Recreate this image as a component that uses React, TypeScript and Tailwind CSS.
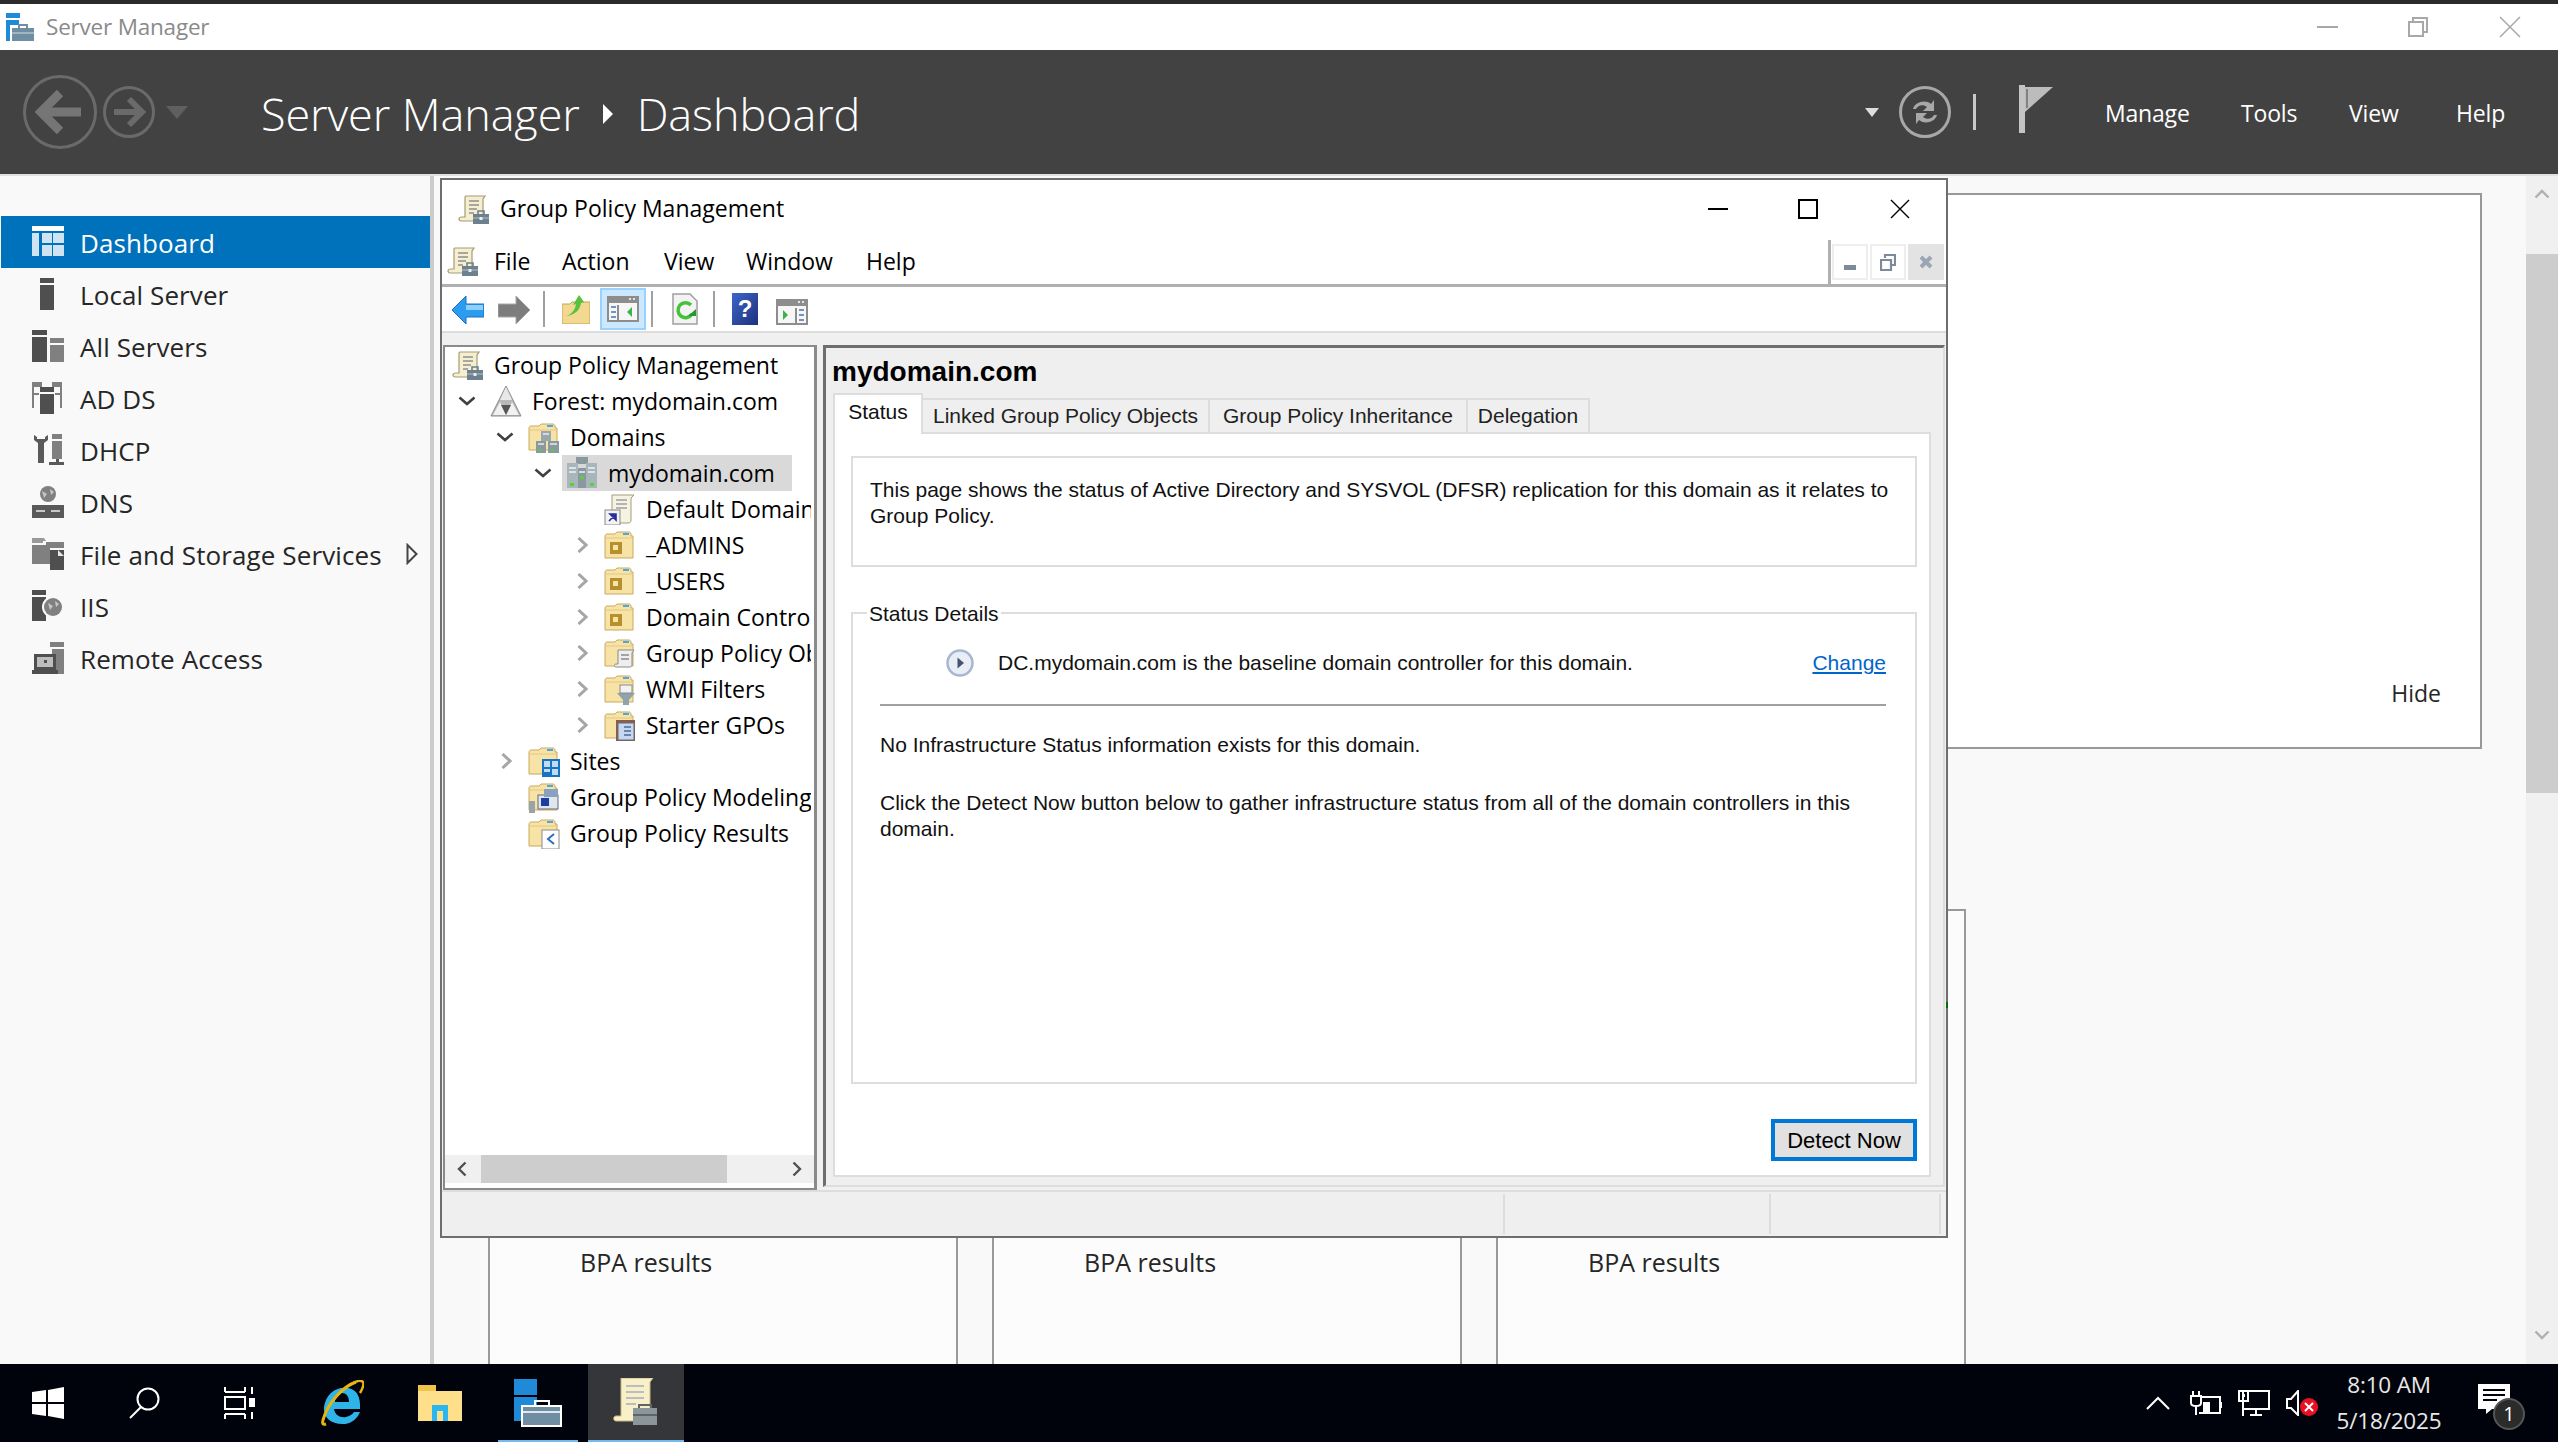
import React from 'react'

const ScrollIcon = ({ className = '' }: { className?: string }) => (
  <svg viewBox="0 0 32 32" className={className}>
    <path d="M8 3h19l-2 3v18c0 2-1 4-3 4H3c-1 0-2-1-2-2s1-2 3-2h3V6C7 4 7 3 8 3z" fill="#f5efcf" stroke="#a59c74" strokeWidth="1.2" />
    <path d="M11 8h10M11 12h10M11 16h8M11 20h5" stroke="#8f8f8f" strokeWidth="1.6" />
    <rect x="15" y="21" width="16" height="10" fill="#6c818d" />
    <path d="M20 21v-3h6v3" fill="none" stroke="#6c818d" strokeWidth="1.6" />
    <path d="M15 25h16" stroke="#a9b8c0" strokeWidth="1.2" />
    <rect x="21.500" y="24" width="3" height="3" fill="#e7edf0" />
  </svg>
)

const FolderBase = () => (
  <>
    <path d="M1 7c0-1 1-2 2-2h8l2-2h12c1 0 2 1 2 2v2h2v22H1z" fill="#f8e3a6" stroke="#c9a95f" strokeWidth="1" />
    <path d="M1 9h28" stroke="#e2c67e" strokeWidth="1" />
    <rect x="19" y="4" width="6" height="2" fill="#49a7e8" />
  </>
)

const FolderIcon = ({ kind }: { kind: string }) => (
  <svg viewBox="0 0 32 32" className="w-8 h-8 shrink-0">
    <FolderBase />
    {kind === 'ou' && (
      <>
        <rect x="6" y="13" width="12" height="12" fill="#b78f2c" />
        <rect x="9" y="16" width="5" height="5" fill="#f3e6a8" />
      </>
    )}
    {kind === 'gpo' && (
      <>
        <path d="M14 13h16l-2 3v12c0 1-1 2-2 2H12c-2 0-2-3 0-3h2z" fill="#eeeeee" stroke="#8a8a8a" />
        <path d="M17 18h8M17 22h8" stroke="#8a8a8a" strokeWidth="1.6" />
      </>
    )}
    {kind === 'wmi' && (
      <>
        <path d="M13 20h18l-6 7v5h-6v-5z" fill="#8fa3ad" />
        <rect x="16" y="12" width="12" height="8" fill="#f2f2f2" stroke="#8a8a8a" />
      </>
    )}
    {kind === 'starter' && (
      <>
        <rect x="12" y="11" width="19" height="21" fill="#8b5b4d" />
        <rect x="14" y="14" width="16" height="17" fill="#c6d7ee" stroke="#60707c" />
        <path d="M20 18h7M20 22h7M20 26h7" stroke="#4a6a96" strokeWidth="1.6" />
      </>
    )}
    {kind === 'sites' && (
      <>
        <rect x="14" y="14" width="18" height="18" fill="#1773c4" />
        <rect x="16" y="16" width="6" height="6" fill="#bfdcf3" />
        <rect x="24" y="16" width="6" height="6" fill="#bfdcf3" />
        <rect x="24" y="24" width="6" height="6" fill="#bfdcf3" />
        <rect x="16" y="24" width="6" height="3" fill="#bfdcf3" />
      </>
    )}
    {kind === 'modeling' && (
      <>
        <rect x="10" y="14" width="20" height="14" fill="#dfe6f2" stroke="#606a78" />
        <rect x="13" y="17" width="8" height="8" fill="#1c3f9e" />
        <rect x="1" y="20" width="6" height="12" fill="#9aa3a8" />
        <rect x="16" y="8" width="14" height="8" fill="#8aa0c0" />
      </>
    )}
    {kind === 'results' && (
      <>
        <rect x="14" y="13" width="17" height="19" fill="#ffffff" stroke="#8a8a8a" />
        <path d="M26 17l-6 5 6 5" fill="none" stroke="#2a6fb8" strokeWidth="2" />
      </>
    )}
    {kind === 'domains' && <ServerCluster />}
  </svg>
)

const ServerCluster = () => (
  <>
    <rect x="13" y="10" width="10" height="10" fill="#9aa7ae" />
    <rect x="8" y="20" width="10" height="12" fill="#8a989f" />
    <rect x="20" y="20" width="11" height="12" fill="#8a989f" />
    <path d="M10 23h6M22 23h7M15 13h6" stroke="#e6ecef" strokeWidth="1.4" />
    <rect x="10" y="28" width="3" height="2" fill="#57d13a" />
    <rect x="23" y="28" width="3" height="2" fill="#57d13a" />
  </>
)

const DomainIcon = () => (
  <svg viewBox="0 0 32 32" className="w-8 h-8 shrink-0">
    <rect x="10" y="0" width="12" height="7" fill="#8a989f" />
    <rect x="1" y="6" width="11" height="25" fill="#a8b5bb" />
    <rect x="20" y="6" width="11" height="25" fill="#a8b5bb" />
    <rect x="12" y="11" width="8" height="20" fill="#8a989f" />
    <path d="M3 11h7M3 15h7M22 11h7M22 15h7M13 15h6" stroke="#eef2f4" strokeWidth="1.4" />
    <rect x="4" y="26" width="4" height="3" fill="#55d43a" />
    <rect x="14" y="19" width="4" height="3" fill="#55d43a" />
    <rect x="24" y="26" width="4" height="3" fill="#55d43a" />
  </svg>
)

const ForestIcon = () => (
  <svg viewBox="0 0 32 32" className="w-8 h-8 shrink-0">
    <path d="M16 1L31 31H1z" fill="#b9b9b9" stroke="#8c8c8c" />
    <path d="M16 2l6 13H10z" fill="#e8e8e8" />
    <path d="M10 17l-7 13h13zM22 17l-6 13h13z" fill="#f1f1f1" />
    <path d="M16 30l-5-10h10z" fill="#555555" />
  </svg>
)

const ShortcutScroll = () => (
  <svg viewBox="0 0 32 32" className="w-8 h-8 shrink-0">
    <path d="M8 2h22l-3 3v22c0 2-1 3-3 3H8z" fill="#f6f3e2" stroke="#a59c74" />
    <path d="M12 7h11M12 11h11M12 15h11" stroke="#a0a0a0" strokeWidth="1.4" />
    <rect x="1" y="17" width="15" height="15" fill="#f2f2f2" stroke="#8a8a8a" />
    <path d="M5 28l6-6M6 21h6v6z" stroke="#2b2e9e" fill="#2b2e9e" strokeWidth="1.6" />
  </svg>
)

const Chevron = ({ dir }: { dir: 'down' | 'right' }) =>
  dir === 'down' ? (
    <svg viewBox="0 0 18 10" className="w-[18px] h-[10px]">
      <path d="M1.500 1.500L9 8l7.500-6.500" fill="none" stroke="#404040" strokeWidth="2.600" />
    </svg>
  ) : (
    <svg viewBox="0 0 11 16" className="w-[11px] h-4 ml-[2px]">
      <path d="M1.500 1L9 8l-7.500 7" fill="none" stroke="#a6a6a6" strokeWidth="3" />
    </svg>
  )

const navIcons: Record<string, React.ReactNode> = {
  Dashboard: (
    <>
      <rect x="0" y="0" width="32" height="5" fill="#ffffff" />
      <rect x="0" y="7" width="7" height="23" fill="#cfe4f2" />
      <rect x="10" y="7" width="10" height="10" fill="#cfe4f2" />
      <rect x="21" y="7" width="11" height="10" fill="#cfe4f2" />
      <rect x="10" y="19" width="10" height="11" fill="#cfe4f2" />
      <rect x="21" y="19" width="11" height="11" fill="#cfe4f2" />
    </>
  ),
  'Local Server': (
    <>
      <rect x="8" y="0" width="14" height="5" fill="#4f4f4f" />
      <rect x="8" y="7" width="14" height="25" fill="#4f4f4f" />
    </>
  ),
  'All Servers': (
    <>
      <rect x="0" y="0" width="15" height="5" fill="#4f4f4f" />
      <rect x="0" y="7" width="15" height="25" fill="#4f4f4f" />
      <rect x="18" y="8" width="14" height="5" fill="#808080" />
      <rect x="18" y="15" width="14" height="17" fill="#808080" />
    </>
  ),
  'AD DS': (
    <>
      <path d="M0 0h10v5H2v6h5v2H2v13H0zM30 0H20v5h8v6h-5v2h5v13h2z" fill="#808080" />
      <rect x="8" y="5" width="14" height="5" fill="#4f4f4f" />
      <rect x="8" y="12" width="14" height="20" fill="#4f4f4f" />
    </>
  ),
  DHCP: (
    <>
      <path d="M2 1v5l4 3v20h6V9l4-3V1l-3 2v2h-8V3z" fill="#5a5a5a" />
      <rect x="20" y="0" width="10" height="5" fill="#808080" />
      <rect x="20" y="7" width="10" height="18" fill="#808080" />
      <rect x="17" y="28" width="15" height="3" fill="#5a5a5a" />
      <rect x="24" y="25" width="3" height="4" fill="#5a5a5a" />
    </>
  ),
  DNS: (
    <>
      <circle cx="16" cy="8" r="8" fill="#808080" />
      <path d="M10 5l5 3-3 4zM18 3l4 3-3 3z" fill="#c6c6c6" />
      <rect x="0" y="19" width="32" height="13" fill="#5a5a5a" />
      <path d="M4 25h9M19 25h9" stroke="#c8c8c8" strokeWidth="2" />
    </>
  ),
  'File and Storage Services': (
    <>
      <path d="M0 0h12l2 3h-3v2H0z" fill="#9a9a9a" />
      <path d="M0 7h18v19H0z" fill="#808080" />
      <path d="M14 4h18v6H14z" fill="#808080" />
      <path d="M18 12h14v20H18z" fill="#4f4f4f" />
      <path d="M26 12l6 6h-6z" fill="#e6e6e6" />
    </>
  ),
  IIS: (
    <>
      <rect x="0" y="0" width="14" height="5" fill="#4f4f4f" />
      <rect x="0" y="7" width="14" height="24" fill="#4f4f4f" />
      <circle cx="21" cy="17" r="11" fill="#f9f9f9" />
      <circle cx="21" cy="17" r="9" fill="#808080" />
      <path d="M16 13l5 3-3 4zM23 11l4 3-3 3z" fill="#c6c6c6" />
    </>
  ),
  'Remote Access': (
    <>
      <rect x="18" y="0" width="14" height="5" fill="#808080" />
      <rect x="20" y="7" width="12" height="25" fill="#808080" />
      <rect x="2" y="12" width="22" height="16" fill="#4f4f4f" />
      <rect x="5" y="15" width="16" height="10" fill="#bdbdbd" />
      <rect x="0" y="28" width="26" height="4" fill="#4f4f4f" />
      <rect x="12" y="18" width="3" height="3" fill="#4f4f4f" />
    </>
  ),
}

const NAV = ['Dashboard', 'Local Server', 'All Servers', 'AD DS', 'DHCP', 'DNS', 'File and Storage Services', 'IIS', 'Remote Access']

const Sidebar = () => (
  <aside className="w-[434px] shrink-0 bg-[#f9f9f9] border-r-4 border-[#cccccc] pt-10 text-[26px] tracking-[0.1px]">
    {NAV.map((name) => (
      <div key={name} className={`h-[52px] flex items-center ml-px pl-[31px] ${name === 'Dashboard' ? 'bg-[#0072bc] text-white' : 'text-[#262626]'}`}>
        <svg viewBox="0 0 32 32" className="w-8 h-8 shrink-0">{navIcons[name]}</svg>
        <span className="ml-4 pt-[3px] whitespace-nowrap">{name}</span>
        {name === 'File and Storage Services' && (
          <svg viewBox="0 0 12 22" className="w-3 h-[22px] ml-[24px]">
            <path d="M1.500 2L10.500 11 1.500 20z" fill="none" stroke="#444444" strokeWidth="2" />
          </svg>
        )}
      </div>
    ))}
  </aside>
)

const Card = () => (
  <div className="w-[470px] h-[472px] shrink-0 border-2 border-[#999999] bg-[#fcfcfc] flex flex-col justify-end pb-[98px] pl-[90px] text-[25px] text-[#262626]">
    <span>BPA results</span>
  </div>
)

const Header = () => (
  <header className="h-[124px] bg-[#424242] flex items-center pl-[23px] text-white">
    <svg viewBox="0 0 74 76" className="w-[74px] h-[76px]">
      <circle cx="37" cy="38" r="35.500" fill="none" stroke="#6a6a6a" strokeWidth="3" />
      <path d="M17 38h41" stroke="#757575" strokeWidth="9" />
      <path d="M37 19L18 38l19 19" fill="none" stroke="#757575" strokeWidth="9" />
    </svg>
    <svg viewBox="0 0 52 52" className="w-[52px] h-[52px] ml-[6px]">
      <circle cx="26" cy="26" r="24.500" fill="none" stroke="#6a6a6a" strokeWidth="3" />
      <path d="M39 26H11" stroke="#6a6a6a" strokeWidth="6" />
      <path d="M26 13l13 13-13 13" fill="none" stroke="#6a6a6a" strokeWidth="6" />
    </svg>
    <svg viewBox="0 0 22 13" className="w-[22px] h-[13px] ml-[11px]"><path d="M0 0h22L11 13z" fill="#5f5f5f" /></svg>
    <div className="ml-[73px] pt-[3px] flex items-center text-[45px] font-light tracking-[-0.1px] leading-none">
      <span>Server Manager</span>
      <svg viewBox="0 0 10 20" className="w-[10px] h-5 ml-[23px] mr-[24px]"><path d="M0 0l10 10L0 20z" fill="#ffffff" /></svg>
      <span>Dashboard</span>
    </div>
    <div className="ml-auto flex items-center">
      <svg viewBox="0 0 14 9" className="w-[14px] h-[9px]"><path d="M0 0h14L7 9z" fill="#dddddd" /></svg>
      <svg viewBox="0 0 52 52" className="w-[52px] h-[52px] ml-5">
        <circle cx="26" cy="26" r="24.500" fill="none" stroke="#a8a8a8" strokeWidth="3" />
        <path d="M14 23c2-7 12-10 18-5l3-4v11H24l4-4c-4-3-9-2-11 2zM38 29c-2 7-12 10-18 5l-3 4V27h11l-4 4c4 3 9 2 11-2z" fill="#a8a8a8" />
      </svg>
      <div className="w-[3px] h-9 bg-[#c8c8c8] ml-[22px]" />
      <svg viewBox="0 0 34 48" className="w-[34px] h-12 ml-[43px] -mt-[6px]">
        <rect x="0" y="0" width="6" height="48" fill="#c4c4c4" />
        <path d="M6 2h28L6 27z" fill="#bcbcbc" />
        <path d="M8 4v19" stroke="#6f6f6f" strokeWidth="1.500" />
      </svg>
      <nav className="flex items-center pt-[2px] text-[23px] tracking-[-0.2px] ml-[52px] mr-[53px]">
        <span className="w-[136px]">Manage</span>
        <span className="w-[108px]">Tools</span>
        <span className="w-[107px]">View</span>
        <span>Help</span>
      </nav>
    </div>
  </header>
)

const TitleBar = () => (
  <div className="h-[46px] bg-white flex items-center pl-[6px] text-[#8a8a8a] text-[22.500px] tracking-[-0.2px]">
    <svg viewBox="0 0 28 28" className="w-7 h-7">
      <rect x="0" y="0" width="14" height="5" fill="#1f8ad8" />
      <rect x="0" y="7" width="4" height="21" fill="#1f8ad8" />
      <rect x="4" y="7" width="9" height="5" fill="#1f8ad8" />
      <rect x="6" y="15" width="22" height="13" fill="#6f8ea1" />
      <path d="M13 15v-3h8v3" fill="none" stroke="#6f8ea1" strokeWidth="2" />
      <path d="M6 20h22" stroke="#cfdce4" />
    </svg>
    <span className="ml-3">Server Manager</span>
    <div className="ml-auto flex items-center">
      <div className="w-[21px] h-[2px] bg-[#a8a8a8]" />
      <svg viewBox="0 0 20 20" className="w-5 h-5 ml-[70px]">
        <path d="M5 4V1h14v14h-3M1 5h14v14H1z" fill="none" stroke="#a8a8a8" strokeWidth="2" />
      </svg>
      <svg viewBox="0 0 22 22" className="w-[22px] h-[22px] ml-[71px] mr-[37px]">
        <path d="M1 1l20 20M21 1L1 21" stroke="#a8a8a8" strokeWidth="1.500" />
      </svg>
    </div>
  </div>
)

type TreeRow = { label: string; depth: number; chevron?: 'down' | 'right'; icon: React.ReactNode; selected?: boolean }

const TREE: TreeRow[] = [
  { label: 'Group Policy Management', depth: 0, icon: <ScrollIcon className="w-8 h-8 shrink-0" /> },
  { label: 'Forest: mydomain.com', depth: 1, chevron: 'down', icon: <ForestIcon /> },
  { label: 'Domains', depth: 2, chevron: 'down', icon: <FolderIcon kind="domains" /> },
  { label: 'mydomain.com', depth: 3, chevron: 'down', icon: <DomainIcon />, selected: true },
  { label: 'Default Domain Policy', depth: 4, icon: <ShortcutScroll /> },
  { label: '_ADMINS', depth: 4, chevron: 'right', icon: <FolderIcon kind="ou" /> },
  { label: '_USERS', depth: 4, chevron: 'right', icon: <FolderIcon kind="ou" /> },
  { label: 'Domain Controllers', depth: 4, chevron: 'right', icon: <FolderIcon kind="ou" /> },
  { label: 'Group Policy Objects', depth: 4, chevron: 'right', icon: <FolderIcon kind="gpo" /> },
  { label: 'WMI Filters', depth: 4, chevron: 'right', icon: <FolderIcon kind="wmi" /> },
  { label: 'Starter GPOs', depth: 4, chevron: 'right', icon: <FolderIcon kind="starter" /> },
  { label: 'Sites', depth: 2, chevron: 'right', icon: <FolderIcon kind="sites" /> },
  { label: 'Group Policy Modeling', depth: 2, icon: <FolderIcon kind="modeling" /> },
  { label: 'Group Policy Results', depth: 2, icon: <FolderIcon kind="results" /> },
]

const INDENT = ['pl-[7px]', 'pl-[7px]', 'pl-[45px]', 'pl-[83px]', 'pl-[121px]']

const Tree = () => (
  <div className="w-[374px] shrink-0 bg-white border-2 border-r-[3px] border-[#8a8a8a] flex flex-col overflow-hidden text-[23px] text-black">
    <div className="flex-1 overflow-hidden pr-[3px]">
      {TREE.map((row) => (
        <div key={row.label} className={`h-9 flex items-center whitespace-nowrap overflow-hidden ${INDENT[row.depth]}`}>
          {row.depth > 0 && (
            <span className="w-[38px] shrink-0 flex justify-center pr-2">
              {row.chevron && <Chevron dir={row.chevron} />}
            </span>
          )}
          <span className={`flex items-center h-full ${row.selected ? 'bg-[#d9d9d9] w-[230px] -ml-1 pl-1' : ''}`}>
            {row.icon}
            <span className="ml-[10px]">{row.label}</span>
          </span>
        </div>
      ))}
    </div>
    <div className="h-[28px] mb-[5px] bg-[#f0f0f0] flex items-center px-[12px]">
      <svg viewBox="0 0 10 16" className="w-[10px] h-4"><path d="M8.500 1.500L2 8l6.500 6.500" fill="none" stroke="#505050" strokeWidth="2.400" /></svg>
      <div className="w-[246px] h-full bg-[#cdcdcd] ml-[14px]" />
      <svg viewBox="0 0 10 16" className="w-[10px] h-4 ml-auto"><path d="M1.500 1.500L8 8l-6.500 6.500" fill="none" stroke="#505050" strokeWidth="2.400" /></svg>
    </div>
  </div>
)

const TABS = [
  { label: 'Linked Group Policy Objects', w: 'w-[287px]' },
  { label: 'Group Policy Inheritance', w: 'w-[258px]' },
  { label: 'Delegation', w: 'w-[122px]' },
]

const StatusPane = () => (
  <section className="flex-1 min-w-0 ml-[6px] mr-[1px] mb-[3px] border-l-[3px] border-t-[3px] border-[#6e6e6e] border-r-2 border-r-[#dddddd] border-b-2 border-b-[#dddddd] bg-[#efefef] pl-[7px] pr-[12px] pb-2 flex flex-col font-['Liberation_Sans'] text-[21px] text-[#111111]">
    <h1 className="h-[45px] flex items-center font-bold text-[28px] text-black -ml-px pt-[2px]">mydomain.com</h1>
    <div className="flex items-end h-[41px] text-[21px] relative z-10 -mb-[2px]">
      <div className="w-[90px] h-[41px] bg-white border-2 border-b-0 border-[#dddddd] flex items-center justify-center pb-[5px]">Status</div>
      {TABS.map((tab) => (
        <div key={tab.label} className={`${tab.w} h-9 border-2 border-l-0 border-[#dddddd] flex items-center justify-center text-[#222222]`}>{tab.label}</div>
      ))}
    </div>
    <div className="flex-1 bg-white border-2 border-[#dddddd] pt-[22px] pl-4 pr-3 flex flex-col">
      <div className="h-[111px] border-2 border-[#dddddd] pl-[17px] pr-2 pt-[19px] leading-[26px]">
        This page shows the status of Active Directory and SYSVOL (DFSR) replication for this domain as it relates to Group Policy.
      </div>
      <div className="relative h-[472px] mt-[45px] border-2 border-[#dddddd] pl-[27px] pr-[29px]">
        <span className="absolute -top-[12px] left-[14px] bg-white px-[2px] leading-6">Status Details</span>
        <div className="flex items-center h-[92px] pt-2 pl-[66px] border-b-2 border-[#a0a0a0]">
          <svg viewBox="0 0 28 28" className="w-7 h-7 shrink-0">
            <circle cx="14" cy="14" r="12.500" fill="#e8edf6" stroke="#a9b6cf" strokeWidth="2.500" />
            <path d="M11.500 8.500L18 14l-6.500 5.500z" fill="#44546e" />
          </svg>
          <span className="ml-6">DC.mydomain.com is the baseline domain controller for this domain.</span>
          <span className="ml-auto text-[#0066cc] underline">Change</span>
        </div>
        <p className="mt-[26px] leading-[26px]">No Infrastructure Status information exists for this domain.</p>
        <p className="mt-[32px] leading-[26px]">Click the Detect Now button below to gather infrastructure status from all of the domain controllers in this domain.</p>
      </div>
      <div className="flex justify-end mt-[35px]">
        <button className="w-[146px] h-[42px] border-[4px] border-[#0078d7] bg-[#e1e1e1] text-[22px] text-black">Detect Now</button>
      </div>
    </div>
  </section>
)

const ToolSep = () => <div className="w-[2px] h-9 bg-[#a0a0a0]" />

const PaneToggle = ({ flip }: { flip?: boolean }) => (
  <svg viewBox="0 0 32 26" className="w-8 h-[26px]">
    <rect x="1" y="1" width="30" height="24" fill="#f6f6f6" stroke="#8d8d8d" strokeWidth="2" />
    <rect x="1" y="1" width="30" height="6" fill="#8d8d8d" />
    <path d="M22 3h2M26 3h2" stroke="#ffffff" strokeWidth="1.500" />
    {flip ? (
      <>
        <path d="M7 11l5 5-5 5z" fill="#3bb34a" />
        <path d="M20 9v15" stroke="#8d8d8d" strokeWidth="2" />
        <path d="M23 11h5M23 16h5M23 21h5" stroke="#7393bd" strokeWidth="2" />
      </>
    ) : (
      <>
        <path d="M25 11l-5 5 5 5z" fill="#3bb34a" />
        <path d="M11 9v15" stroke="#8d8d8d" strokeWidth="2" />
        <path d="M4 11h5M4 16h5M4 21h5" stroke="#7393bd" strokeWidth="2" />
      </>
    )}
  </svg>
)

const Toolbar = () => (
  <div className="h-[46px] bg-white border-b-2 border-[#dddddd] flex items-center pl-[10px]">
    <svg viewBox="0 0 32 30" className="w-8 h-[30px] mt-[2px]">
      <path d="M0 15L14 1v8h18v13H14v7z" fill="#2b9cf0" stroke="#1b6fc0" />
      <path d="M14 10h17v5H14z" fill="#8fd0fb" />
    </svg>
    <svg viewBox="0 0 32 30" className="w-8 h-[30px] ml-[14px] mt-[2px]">
      <path d="M32 15L18 1v8H0v13h18v7z" fill="#7d7d7d" stroke="#a8a8a8" />
    </svg>
    <div className="ml-[13px]"><ToolSep /></div>
    <svg viewBox="0 0 28 30" className="w-7 h-[30px] ml-[17px]">
      <path d="M0 10h8l2-2h18v22H0z" fill="#f2d890" stroke="#c4a45a" />
      <path d="M4 22c6-2 9-6 10-12l-3 1 6-10 5 7-3 1c-1 7-6 12-15 13z" fill="#56c23d" />
    </svg>
    <div className="w-[46px] h-[42px] ml-[10px] bg-[#cce8ff] border-2 border-[#99d1ff] flex items-center justify-center">
      <PaneToggle />
    </div>
    <div className="ml-[5px]"><ToolSep /></div>
    <svg viewBox="0 0 26 32" className="w-[26px] h-8 ml-[19px]">
      <path d="M1 1h17l7 7v23H1z" fill="#f3f3f3" stroke="#a0a0a0" strokeWidth="1.500" />
      <path d="M19 12a7.500 7.500 0 1 0 1 9" fill="none" stroke="#46c23a" strokeWidth="3.500" />
      <path d="M16 23h8v-7z" fill="#1f9a2e" />
    </svg>
    <div className="ml-[15px]"><ToolSep /></div>
    <div className="w-[26px] h-8 ml-[17px] bg-gradient-to-br from-[#3d66c8] to-[#1e327e] flex items-center justify-center text-white font-bold text-[24px] font-['Liberation_Sans']">?</div>
    <div className="ml-[18px] mt-[5px]"><PaneToggle flip /></div>
  </div>
)

const MenuBar = () => (
  <div className="h-[47px] flex">
    <div className="flex-1 flex items-center pl-[5px] pb-[2px] border-b-[3px] border-r-[3px] border-[#b0b0b0] text-[23px] text-black">
      <ScrollIcon className="w-8 h-8" />
      <span className="w-[68px] ml-[15px]">File</span>
      <span className="w-[102px]">Action</span>
      <span className="w-[82px]">View</span>
      <span className="w-[120px]">Window</span>
      <span>Help</span>
    </div>
    <div className="flex gap-[2px] items-start pt-1 pl-[1px] border-b-[3px] border-[#b0b0b0] pr-[2px]">
      <div className="w-9 h-9 border-2 border-[#eeeeee] flex items-end justify-center pb-2"><div className="w-3 h-[5px] bg-[#7d8a99]" /></div>
      <div className="w-9 h-9 border-2 border-[#eeeeee] flex items-center justify-center">
        <svg viewBox="0 0 16 17" className="w-4 h-[17px]"><path d="M5 4V1h10v10h-3M1 6h10v10H1z" fill="none" stroke="#7d8a99" strokeWidth="2.200" /></svg>
      </div>
      <div className="w-9 h-9 bg-[#e3e3e3] flex items-center justify-center">
        <svg viewBox="0 0 14 14" className="w-[14px] h-[14px]"><path d="M2 2l10 10M12 2L2 12" stroke="#9aa6b3" strokeWidth="4" /></svg>
      </div>
    </div>
  </div>
)

const PolicyWindow = () => (
  <div className="absolute left-[440px] top-[178px] w-[1508px] h-[1060px] border-2 border-[#6e6e6e] bg-white flex flex-col">
    <div className="h-[60px] flex items-center pl-4 pb-[3px] text-[23px] text-black">
      <ScrollIcon className="w-8 h-8" />
      <span className="ml-[10px]">Group Policy Management</span>
      <div className="ml-auto flex items-center">
        <div className="w-5 h-[2px] bg-black" />
        <div className="w-5 h-5 border-2 border-black ml-[70px]" />
        <svg viewBox="0 0 20 20" className="w-5 h-5 ml-[72px] mr-9"><path d="M1 1l18 18M19 1L1 19" stroke="#000000" strokeWidth="1.400" /></svg>
      </div>
    </div>
    <MenuBar />
    <Toolbar />
    <div className="flex-1 min-h-0 flex bg-[#f0f0f0] pt-3 pl-px">
      <Tree />
      <StatusPane />
    </div>
    <div className="h-[46px] shrink-0 bg-[#efefef] border-t-2 border-[#dddddd] flex py-[2px]">
      <div className="w-[1063px] border-r-2 border-[#dddddd]" />
      <div className="w-[266px] border-r-2 border-[#dddddd]" />
      <div className="w-[170px] border-r-2 border-[#dddddd]" />
    </div>
    <div className="absolute -right-[2px] top-[822px] w-[2px] h-[6px] bg-[#0a6b0a]" />
  </div>
)

const TaskIcons = () => (
  <>
    <div className="w-8 ml-8">
      <svg viewBox="0 0 32 32" className="w-8 h-8"><path d="M0 5l14-2v12H0zM16 3l16-3v15H16zM0 17h14v12L0 27zM16 17h16v15l-16-3z" fill="#ffffff" /></svg>
    </div>
    <svg viewBox="0 0 32 32" className="w-8 h-8 ml-16"><circle cx="20" cy="12" r="10.500" fill="none" stroke="#ffffff" strokeWidth="2" /><path d="M13 20L2 31" stroke="#ffffff" strokeWidth="2" /></svg>
    <svg viewBox="0 0 32 32" className="w-8 h-8 ml-16">
      <path d="M1 5h20M1 0v5M21 0v5M1 27h20M1 27v5M21 27v5" stroke="#ffffff" strokeWidth="2" fill="none" />
      <rect x="1" y="10" width="20" height="12" fill="none" stroke="#ffffff" strokeWidth="2" />
      <path d="M28 0v7M28 25v7" stroke="#ffffff" strokeWidth="2" />
      <rect x="25" y="11" width="6" height="9" fill="#ffffff" />
    </svg>
    <svg viewBox="0 0 44 46" className="w-11 h-[46px] ml-16">
      <path d="M4 27C6 14 16 6 28 8c8 1 13 8 12 21H14c1 6 6 9 12 8 3-1 6-2 8-5h6c-3 7-8 11-15 12C12 45 3 38 4 27zm11-5h14c0-6-3-9-7-9-4 1-7 4-7 9z" fill="#2fb4ea" />
      <path d="M36 2C24 6 8 22 3 40c-1 4 0 5 3 4" fill="none" stroke="#e8b50e" strokeWidth="3" />
      <path d="M30 5c6-4 11-5 13-3 1 2 0 6-3 11" fill="none" stroke="#e8b50e" strokeWidth="2.500" />
    </svg>
    <svg viewBox="0 0 44 36" className="w-11 h-9 ml-[54px]">
      <path d="M0 2h18v4h26v30H0z" fill="#ffe08a" />
      <path d="M0 0h18v6H0z" fill="#f0c34b" />
      <path d="M14 36V20h16v16h-5V26h-6v10z" fill="#2ab6ee" />
    </svg>
    <svg viewBox="0 0 49 48" className="w-[49px] h-12 ml-[51px]">
      <rect x="1" y="0" width="23" height="16" fill="#1f8ad8" />
      <rect x="1" y="18" width="23" height="24" fill="#1f8ad8" />
      <rect x="9" y="27" width="39" height="20" fill="#6f8ea1" stroke="#ffffff" strokeWidth="2" />
      <path d="M22 27v-5h14v5" fill="none" stroke="#ffffff" strokeWidth="2" />
      <path d="M10 33h37" stroke="#dfe8ec" strokeWidth="2" />
    </svg>
  </>
)

const Taskbar = () => (
  <footer className="h-[78px] bg-[#01030c] relative flex items-center">
    <TaskIcons />
    <div className="absolute left-[498px] bottom-0 w-[80px] h-[2px] bg-[#76b9ed]" />
    <div className="ml-[26px] w-[96px] h-full bg-[#35363a] border-b-2 border-[#76b9ed] flex items-center justify-center">
      <svg viewBox="0 0 46 48" className="w-[46px] h-12">
        <path d="M8 0h32l-3 4v34c0 3-2 5-4 5H3c-3 0-3-5 0-5h5z" fill="#f8f0c8" stroke="#c8b880" />
        <path d="M13 8h18M13 14h18M13 20h18M13 26h10" stroke="#bdbdbd" strokeWidth="2" />
        <rect x="20" y="30" width="24" height="17" fill="#8c9599" />
        <path d="M26 30v-3h12v3M20 37h24" stroke="#5c6669" strokeWidth="2" fill="none" />
      </svg>
    </div>
    <div className="ml-auto flex items-center text-[#e8e8e8]">
      <svg viewBox="0 0 24 14" className="w-6 h-[14px]"><path d="M1 13L12 2l11 11" fill="none" stroke="#ffffff" strokeWidth="2" /></svg>
      <svg viewBox="0 0 32 24" className="w-8 h-6 ml-5">
        <path d="M3 0v5M9 0v5M1 5h10v7c0 2-2 3-5 3s-5-1-5-3zM6 15v9" fill="none" stroke="#ffffff" strokeWidth="2" />
        <path d="M11 6h19v16H9" fill="none" stroke="#ffffff" strokeWidth="2" />
        <rect x="13" y="11" width="7" height="10" fill="#ffffff" />
        <rect x="30" y="11" width="2" height="6" fill="#ffffff" />
      </svg>
      <svg viewBox="0 0 32 26" className="w-8 h-[26px] ml-4">
        <path d="M10 1h21v18H5M1 1h9v10H1zM5 1v25M18 19v6M12 25h12" fill="none" stroke="#ffffff" strokeWidth="2" />
        <rect x="4" y="4" width="3" height="3" fill="#ffffff" />
      </svg>
      <div className="relative ml-4 w-8 h-[26px]">
        <svg viewBox="0 0 14 26" className="w-[14px] h-[26px]"><path d="M12 1v24L5 18H1V9h4z" fill="none" stroke="#ffffff" strokeWidth="2" /></svg>
        <div className="absolute left-[14px] top-[8px] w-[18px] h-[18px] rounded-full bg-[#e81123] flex items-center justify-center">
          <svg viewBox="0 0 10 10" className="w-[10px] h-[10px]"><path d="M1 1l8 8M9 1L1 9" stroke="#ffffff" strokeWidth="2" /></svg>
        </div>
      </div>
      <div className="w-[120px] ml-[11px] mr-[29px] flex flex-col items-center text-[22.500px] leading-[36px] tracking-[-0.2px] whitespace-nowrap">
        <span>8:10 AM</span>
        <span>5/18/2025</span>
      </div>
      <div className="relative w-8 h-[30px] mr-12 mb-[8px]">
        <svg viewBox="0 0 32 30" className="w-8 h-[30px]">
          <path d="M0 0h32v25H14l-6 5v-5H0z" fill="#ffffff" />
          <path d="M5 6h22M5 11h22M5 16h14" stroke="#01030c" strokeWidth="2" />
        </svg>
        <div className="absolute left-[15px] top-[14px] w-8 h-8 rounded-full bg-[#2b2b2b] border-2 border-[#555555] flex items-center justify-center text-white text-[20px] leading-none">1</div>
      </div>
    </div>
  </footer>
)

const ScrollRail = () => (
  <div className="w-8 shrink-0 bg-[#f0f0f0] flex flex-col">
    <div className="h-[78px] flex justify-center pt-[13px]">
      <svg viewBox="0 0 16 10" className="w-4 h-[10px]"><path d="M1.500 8.500L8 2l6.500 6.500" fill="none" stroke="#b0b0b0" strokeWidth="2.400" /></svg>
    </div>
    <div className="h-[539px] bg-[#cdcdcd]" />
    <div className="mt-auto h-[34px] flex justify-center">
      <svg viewBox="0 0 16 10" className="w-4 h-[10px]"><path d="M1.500 1.500L8 8l6.500-6.500" fill="none" stroke="#b0b0b0" strokeWidth="2.400" /></svg>
    </div>
  </div>
)

export default function App() {
  return (
    <div className="relative w-[2558px] h-[1442px] overflow-hidden flex flex-col font-['Open_Sans'] bg-white">
      <div className="h-1 shrink-0 bg-[#2b2b2b]" />
      <TitleBar />
      <Header />
      <div className="h-[2px] shrink-0 bg-[#e0e0e0]" />
      <main className="flex-1 min-h-0 flex">
        <Sidebar />
        <div className="flex-1 min-w-0 bg-[#f9f9f9] pl-[54px] pt-[17px] overflow-hidden">
          <div className="w-[1994px] h-[556px] border-2 border-[#999999] bg-white flex items-end justify-end pr-[39px] pb-[37px] text-[23px] text-[#262626]">
            <span>Hide</span>
          </div>
          <div className="mt-[160px] flex gap-[34px]">
            <Card />
            <Card />
            <Card />
          </div>
        </div>
        <ScrollRail />
      </main>
      <Taskbar />
      <PolicyWindow />
    </div>
  )
}
